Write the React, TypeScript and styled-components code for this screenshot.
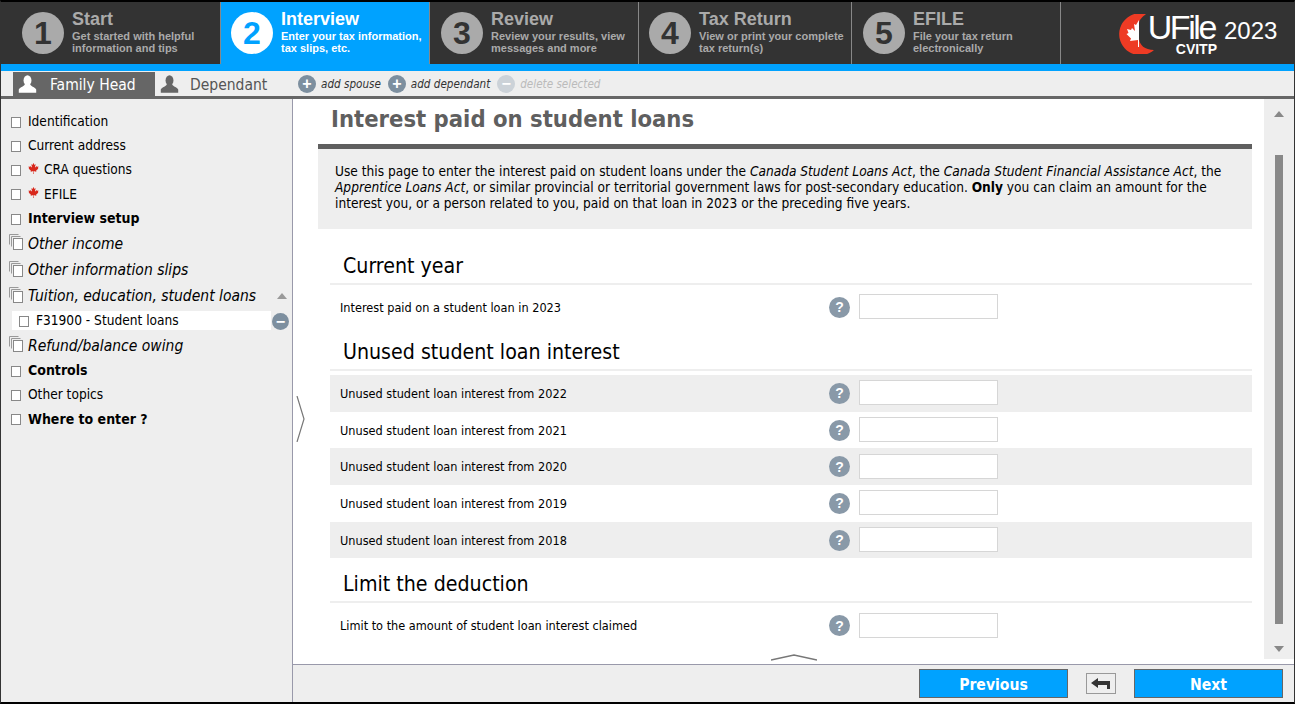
import styled, { createGlobalStyle } from "styled-components";
import { FaCanadianMapleLeaf } from "react-icons/fa";

const steps = [
  { n: 1, title: "Start", lines: ["Get started with helpful", "information and tips"], width: 220, pad: 21 },
  { n: 2, title: "Interview", lines: ["Enter your tax information,", "tax slips, etc."], width: 209, pad: 10, active: true },
  { n: 3, title: "Review", lines: ["Review your results, view", "messages and more"], width: 209, pad: 11 },
  { n: 4, title: "Tax Return", lines: ["View or print your complete", "tax return(s)"], width: 213, pad: 10 },
  { n: 5, title: "EFILE", lines: ["File your tax return", "electronically"], width: 209, pad: 11 },
];

const UserIcon = ({ color }: { color: string }) => (
  <svg width="19" height="18" viewBox="0 0 24 22">
    <ellipse cx="12" cy="6.500" rx="5" ry="6.500" fill={color} />
    <path d="M9 10C9 14 2 15 1 18v4h22v-4C22 15 15 14 15 10z" fill={color} />
  </svg>
);

const StackIcon = () => (
  <StackSvg viewBox="0 0 14 16">
    <path d="M.5 10.500V.5h9" fill="none" stroke="#999" />
    <path d="M2.500 12.500V2.500h9" fill="none" stroke="#999" />
    <rect x="4.500" y="4.500" width="9" height="11" fill="#fff" stroke="#888" />
  </StackSvg>
);

const Leaf = () => (
  <LeafWrap>
    <FaCanadianMapleLeaf size={11} color="#d8281c" />
  </LeafWrap>
);

const App = () => {
  return (
    <Page>
      <GlobalStyle />
      <StepBar>
        {steps.map((s) => (
          <Step key={s.n} $width={s.width} $pad={s.pad} $active={!!s.active}>
            <StepNumber $active={!!s.active}>{s.n}</StepNumber>
            <StepText>
              <StepTitle>{s.title}</StepTitle>
              <StepLine>{s.lines[0]}</StepLine>
              <StepLine>{s.lines[1]}</StepLine>
            </StepText>
          </Step>
        ))}
        <Logo>
          <LogoMark viewBox="0 0 36 40">
            <path d="M27 0A21 21 0 1 0 35 36C26 36 20 31 20 24V10C20 6 23 3 27 0Z" fill="#ee3b24" />
            <path d="M20 6l-3 5-2-1 1 7-3-3-1 2-4-1 1.500 4-2 1 4.500 4.500-1 2.500 8-1v7h1z" fill="#fff" />
          </LogoMark>
          <LogoWords>
            <LogoName>UFile</LogoName>
            <LogoSub>CVITP</LogoSub>
          </LogoWords>
          <LogoYear>2023</LogoYear>
        </Logo>
      </StepBar>
      <BlueStrip />
      <TabBar>
        <Tab $active>
          <UserIcon color="#fff" />
          <TabLabel>Family Head</TabLabel>
        </Tab>
        <Tab>
          <UserIcon color="#666" />
          <TabLabel>Dependant</TabLabel>
        </Tab>
        <TabActions>
          <TabAction>
            <RoundIcon>+</RoundIcon>
            add spouse
          </TabAction>
          <TabAction>
            <RoundIcon>+</RoundIcon>
            add dependant
          </TabAction>
          <TabAction $disabled>
            <RoundIcon $disabled>−</RoundIcon>
            delete selected
          </TabAction>
        </TabActions>
      </TabBar>
      <Body>
        <Sidebar>
          <NavRow $h={24}><Box />Identification</NavRow>
          <NavRow $h={24}><Box />Current address</NavRow>
          <NavRow $h={24}><Box /><Leaf />CRA questions</NavRow>
          <NavRow $h={25}><Box /><Leaf />EFILE</NavRow>
          <NavRow $h={24} $bold><Box />Interview setup</NavRow>
          <NavRow $h={27} $italic><StackIcon />Other income</NavRow>
          <NavRow $h={26} $italic><StackIcon />Other information slips</NavRow>
          <NavRow $h={26} $italic><StackIcon />Tuition, education, student loans<CollapseArrow /></NavRow>
          <SubRow>
            <SubItem><Box />F31900 - Student loans</SubItem>
            <RemoveIcon>−</RemoveIcon>
          </SubRow>
          <NavRow $h={25} $italic><StackIcon />Refund/balance owing</NavRow>
          <NavRow $h={24} $bold><Box />Controls</NavRow>
          <NavRow $h={24}><Box />Other topics</NavRow>
          <NavRow $h={25} $bold><Box />Where to enter ?</NavRow>
        </Sidebar>
        <RightColumn>
          <Main>
            <Content>
              <SideToggle viewBox="0 0 10 46">
                <path d="M1 0l7 23-7 23" fill="none" stroke="#777" strokeWidth="1.2" />
              </SideToggle>
              <PageTitle>Interest paid on student loans</PageTitle>
              <InfoBox>
                Use this page to enter the interest paid on student loans under the <em>Canada Student Loans Act</em>, the{" "}
                <em>Canada Student Financial Assistance Act</em>, the <em>Apprentice Loans Act</em>, or similar provincial or
                territorial government laws for post-secondary education. <strong>Only</strong> you can claim an amount for the
                interest you, or a person related to you, paid on that loan in 2023 or the preceding five years.
              </InfoBox>
              <Section>
                <SectionHead>Current year</SectionHead>
                <Row $h={44}>
                  <RowLabel>Interest paid on a student loan in 2023</RowLabel>
                  <Help>?</Help>
                  <AmountInput />
                </Row>
              </Section>
              <Section $top={5}>
                <SectionHead>Unused student loan interest</SectionHead>
                <RowList>
                  {[2022, 2021, 2020, 2019, 2018].map((y) => (
                    <Row key={y} $striped $h={36.7}>
                      <RowLabel>Unused student loan interest from {y}</RowLabel>
                      <Help>?</Help>
                      <AmountInput />
                    </Row>
                  ))}
                </RowList>
              </Section>
              <Section $top={7.5}>
                <SectionHead>Limit the deduction</SectionHead>
                <Row $h={46}>
                  <RowLabel>Limit to the amount of student loan interest claimed</RowLabel>
                  <Help>?</Help>
                  <AmountInput />
                </Row>
              </Section>
              <BottomToggle viewBox="0 0 46 7">
                <path d="M0 6l23-5 23 5" fill="none" stroke="#777" strokeWidth="1.500" />
              </BottomToggle>
            </Content>
            <ScrollTrack>
              <ScrollArrow $up />
              <ScrollThumb />
              <ScrollArrow />
            </ScrollTrack>
          </Main>
          <Footer>
            <NavButton>Previous</NavButton>
            <BackButton>
              <svg width="20" height="12" viewBox="0 0 20 12">
                <path d="M0 5l7-5v3h12v8h-3V7H7v3z" fill="#333" />
              </svg>
            </BackButton>
            <NavButton>Next</NavButton>
          </Footer>
        </RightColumn>
      </Body>
    </Page>
  );
};

const GlobalStyle = createGlobalStyle`
  html, body {
    margin: 0;
    padding: 0;
    background: #fff;
  }
  * {
    box-sizing: border-box;
  }
`;

const Page = styled.div`
  width: 1295px;
  height: 704px;
  display: flex;
  flex-direction: column;
  overflow: hidden;
  border-top: 2px solid #000;
  border-left: 1px solid #333;
  border-right: 1px solid #333;
  border-bottom: 2px solid #000;
  font-family: "DejaVu Sans Condensed", "DejaVu Sans", sans-serif;
  font-stretch: condensed;
`;
const StepBar = styled.div`
  display: flex;
  height: 62px;
  flex: none;
  background: #333;
`;
const Step = styled.div<{ $width: number; $pad: number; $active: boolean }>`
  width: ${({ $width }) => $width}px;
  display: flex;
  align-items: center;
  gap: 8px;
  padding-left: ${({ $pad }) => $pad}px;
  border-right: 1px solid #888;
  background: ${({ $active }) => ($active ? "#00a2ff" : "#333")};
  color: ${({ $active }) => ($active ? "#fff" : "#aaa")};
  font-family: "Liberation Sans", Arial, sans-serif;
  font-stretch: normal;
  font-weight: bold;
  white-space: nowrap;
`;
const StepNumber = styled.div<{ $active: boolean }>`
  width: 42px;
  height: 42px;
  flex: none;
  border-radius: 50%;
  display: flex;
  align-items: center;
  justify-content: center;
  font-size: 32px;
  background: ${({ $active }) => ($active ? "#fff" : "#aaa")};
  color: ${({ $active }) => ($active ? "#00a2ff" : "#333")};
`;
const StepText = styled.div`
  display: flex;
  flex-direction: column;
  margin-top: -4px;
`;
const StepTitle = styled.div`
  font-size: 18px;
  line-height: 20px;
  margin-bottom: 1px;
`;
const StepLine = styled.div`
  font-size: 11px;
  line-height: 12px;
`;
const Logo = styled.div`
  flex: 1;
  display: flex;
  align-items: center;
  padding-left: 58px;
  color: #fff;
  font-family: "Liberation Sans", Arial, sans-serif;
  font-stretch: normal;
`;
const LogoMark = styled.svg`
  width: 36px;
  height: 40px;
  margin-right: -6px;
  margin-top: 1px;
`;
const LogoWords = styled.div`
  display: flex;
  flex-direction: column;
  align-items: flex-end;
  width: 68px;
`;
const LogoName = styled.div`
  font-size: 34px;
  line-height: 31px;
  letter-spacing: -2.4px;
  margin-right: 2px;
`;
const LogoSub = styled.div`
  font-size: 14px;
  line-height: 12px;
  font-weight: bold;
`;
const LogoYear = styled.div`
  font-size: 24px;
  margin: 0 0 4px 7px;
`;
const BlueStrip = styled.div`
  height: 7px;
  flex: none;
  background: #00a2ff;
`;
const TabBar = styled.div`
  height: 28px;
  flex: none;
  display: flex;
  align-items: flex-end;
  padding-left: 12px;
  background: #eee;
  border-bottom: 3px solid #666;
`;
const Tab = styled.div<{ $active?: boolean }>`
  height: 24px;
  width: 142px;
  display: flex;
  align-items: center;
  gap: ${({ $active }) => ($active ? "13px" : "11px")};
  padding-left: 5px;
  font-size: 15.5px;
  background: ${({ $active }) => ($active ? "#666" : "transparent")};
  color: ${({ $active }) => ($active ? "#fff" : "#555")};
`;
const TabLabel = styled.span`
  margin-top: 2px;
`;
const TabActions = styled.div`
  display: flex;
  align-items: center;
  height: 24px;
  gap: 7px;
  margin-left: 1px;
`;
const TabAction = styled.div<{ $disabled?: boolean }>`
  display: flex;
  align-items: center;
  gap: 5px;
  font-size: 11.6px;
  font-style: italic;
  color: ${({ $disabled }) => ($disabled ? "#bbb" : "#333")};
`;
const RoundIcon = styled.span<{ $disabled?: boolean }>`
  width: 18px;
  height: 18px;
  flex: none;
  border-radius: 50%;
  display: flex;
  align-items: center;
  justify-content: center;
  font: bold 16px/1 "Liberation Sans", sans-serif;
  color: #fff;
  background: ${({ $disabled }) => ($disabled ? "#ccd2d8" : "#7d8f9f")};
`;
const RemoveIcon = styled(RoundIcon)`
  width: 17px;
  height: 17px;
  margin: 3px 0 0 1px;
`;
const Body = styled.div`
  flex: 1;
  min-height: 0;
  display: flex;
`;
const Sidebar = styled.nav`
  width: 292px;
  flex: none;
  padding: 10px 0 0 10px;
  background: #eee;
  border-right: 1px solid #99a;
  font-size: 13.6px;
  color: #000;
`;
const RightColumn = styled.div`
  flex: 1;
  min-width: 0;
  display: flex;
  flex-direction: column;
`;
const NavRow = styled.div<{ $h: number; $bold?: boolean; $italic?: boolean }>`
  height: ${({ $h }) => $h}px;
  display: flex;
  align-items: center;
  gap: 7px;
  white-space: nowrap;
  font-weight: ${({ $bold }) => ($bold ? "bold" : "normal")};
  font-style: ${({ $italic }) => ($italic ? "italic" : "normal")};
  font-size: ${({ $italic, $bold }) => ($italic ? "15.5px" : $bold ? "14px" : "13.6px")};
`;
const Box = styled.span`
  width: 10px;
  height: 11px;
  flex: none;
  margin-top: 2px;
  background: #fff;
  border: 1px solid #888;
`;
const StackSvg = styled.svg`
  width: 14px;
  height: 16px;
  flex: none;
  margin: -3px -2px 0 -2px;
`;
const LeafWrap = styled.span`
  display: flex;
  margin: 0 -2px 2px 0;
`;
const CollapseArrow = styled.span`
  width: 0;
  height: 0;
  margin: 0 5px 0 auto;
  border: 5px solid transparent;
  border-top: 0;
  border-bottom: 6px solid #999;
`;
const SubRow = styled.div`
  height: 22px;
  margin: 0 0 2px 1px;
  display: flex;
  align-items: center;
`;
const SubItem = styled.div`
  width: 259px;
  height: 19px;
  display: flex;
  align-items: center;
  gap: 7px;
  padding-left: 7px;
  background: #fff;
`;
const Main = styled.div`
  flex: 1;
  min-height: 0;
  display: flex;
  background: #fff;
`;
const Content = styled.div`
  flex: 1;
  min-width: 0;
  padding: 0 12px 0 25px;
  position: relative;
`;
const SideToggle = styled.svg`
  position: absolute;
  left: 3px;
  top: 297px;
  width: 10px;
  height: 46px;
`;
const BottomToggle = styled.svg`
  position: absolute;
  left: 478px;
  bottom: 3px;
  width: 46px;
  height: 7px;
`;
const PageTitle = styled.h1`
  margin: 0;
  height: 50px;
  padding: 5px 0 0 13px;
  font-size: 23.6px;
  line-height: 30px;
  color: #5f5f5f;
  border-bottom: 5px solid #5f5f5f;
`;
const InfoBox = styled.div`
  height: 80px;
  padding: 14px 17px 0;
  background: #eee;
  font-size: 13.6px;
  line-height: 16px;
  color: #000;
`;
const Section = styled.section<{ $top?: number }>`
  margin: ${({ $top }) => $top ?? 19}px 0 0 12px;
`;
const SectionHead = styled.h2`
  margin: 0;
  height: 37px;
  padding-left: 13px;
  font-size: 21.2px;
  font-weight: normal;
  line-height: 36px;
  border-bottom: 2px solid #eee;
  color: #000;
`;
const RowList = styled.div`
  padding-top: 4px;
`;
const Row = styled.div<{ $h: number; $striped?: boolean }>`
  height: ${({ $h }) => $h}px;
  display: flex;
  align-items: center;
  padding-left: 10px;
  font-size: 12.6px;
  color: #000;
  ${({ $striped }) => $striped && "&:nth-child(odd) { background: #eee; }"}
`;
const RowLabel = styled.div`
  width: 489px;
`;
const Help = styled.span`
  width: 21px;
  height: 21px;
  flex: none;
  border-radius: 50%;
  display: flex;
  align-items: center;
  justify-content: center;
  font: bold 14px/1 "Liberation Sans", sans-serif;
  color: #fff;
  background: #8999a8;
`;
const AmountInput = styled.input`
  width: 139px;
  height: 25px;
  margin: -1px 0 0 9px;
  background: #fff;
  border: 1px solid #d6d6d6;
`;
const ScrollTrack = styled.div`
  width: 30px;
  flex: none;
  display: flex;
  flex-direction: column;
  align-items: center;
  background: #eee;
  padding: 12px 0 7px 0;
  margin-bottom: 5px;
`;
const ScrollArrow = styled.span<{ $up?: boolean }>`
  width: 0;
  height: 0;
  flex: none;
  border: 5px solid transparent;
  ${({ $up }) => ($up ? "border-top: 0; border-bottom: 6px solid #888;" : "border-bottom: 0; border-top: 6px solid #888;")}
`;
const ScrollThumb = styled.div`
  flex: 1;
  width: 8px;
  margin: 38px 0 22px;
  background: #888;
`;
const Footer = styled.div`
  height: 38px;
  flex: none;
  display: flex;
  align-items: center;
  justify-content: flex-end;
  gap: 18px;
  padding-right: 11px;
  background: #eee;
  border-top: 1px solid #99a;
`;
const NavButton = styled.button`
  width: 149px;
  height: 29px;
  padding: 2px 0 0;
  background: #00a2ff;
  border: 1px solid #666;
  color: #fff;
  font: bold 15.6px "DejaVu Sans Condensed", "DejaVu Sans", sans-serif;
`;
const BackButton = styled.button`
  width: 30px;
  height: 21px;
  padding: 0;
  display: flex;
  align-items: center;
  justify-content: center;
  background: #eee;
  border: 1px solid #999;
`;

export default App;
